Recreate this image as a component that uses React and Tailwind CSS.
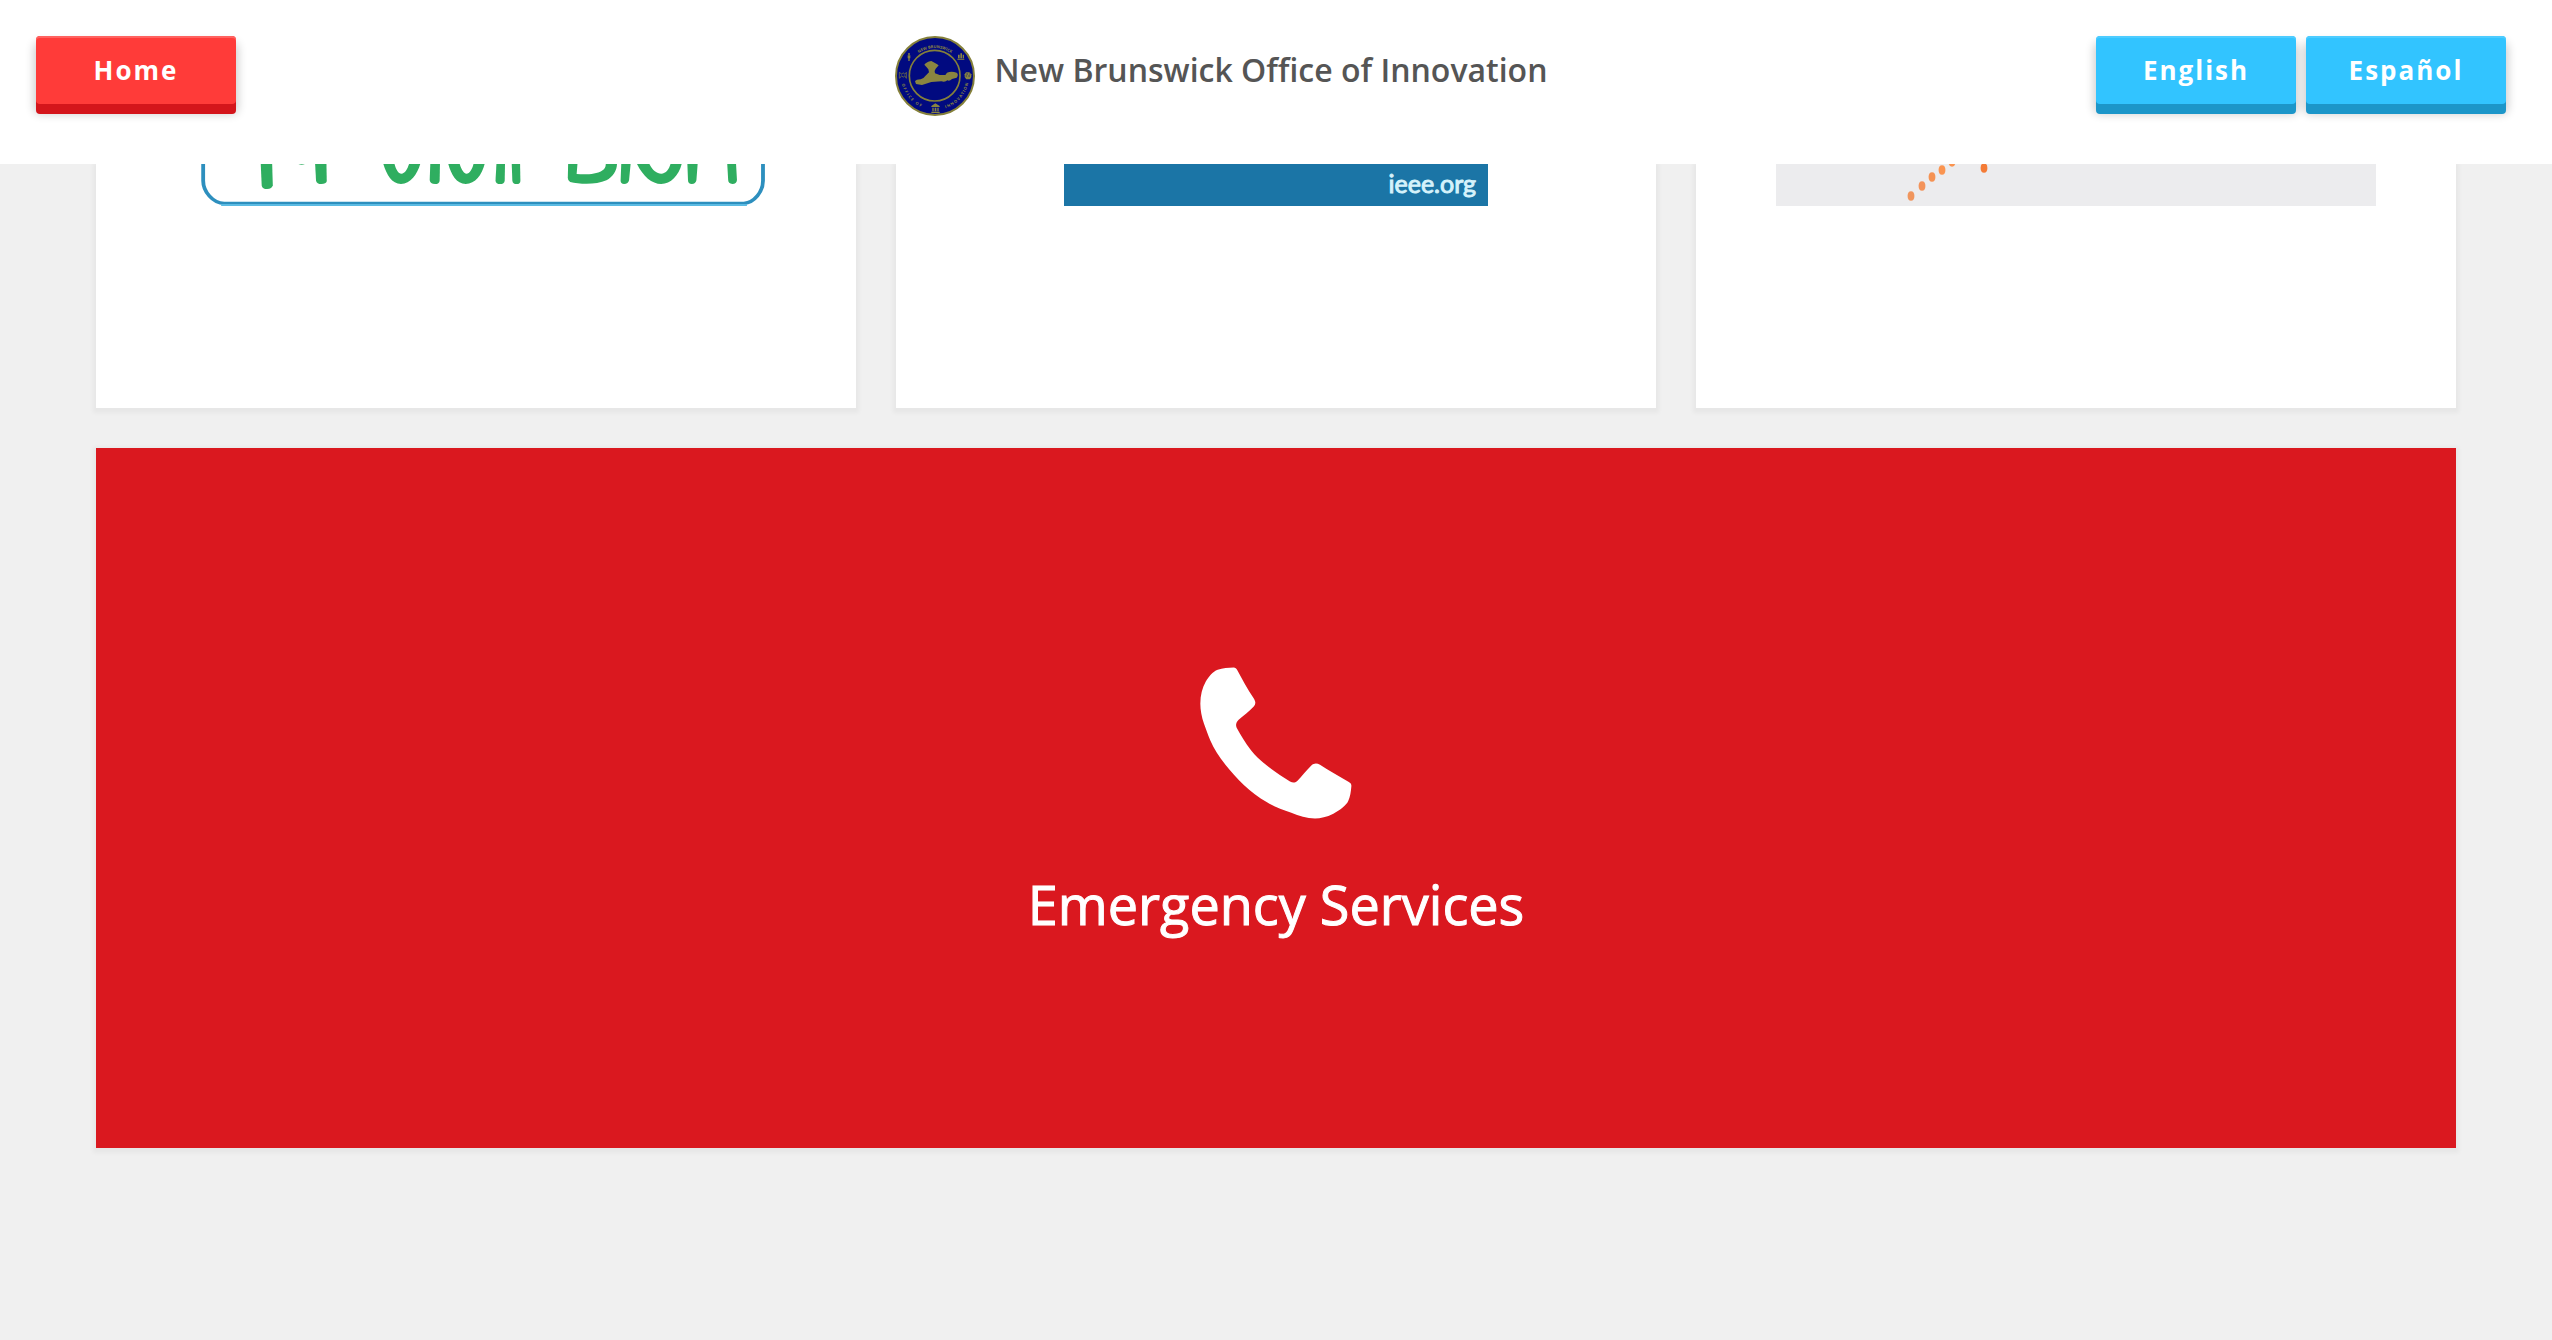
import clsx from "clsx";

const dots = [
  { x: 135, y: 32, color: "#f0955d" },
  { x: 146, y: 22, color: "#f3935a" },
  { x: 156, y: 13, color: "#f59253" },
  { x: 166, y: 6, color: "#fa9450" },
  { x: 176, y: -2, color: "#fa9450" },
  { x: 208, y: 4, color: "#f47b36" },
];

function Button({ className, children, ...props }) {
  return (
    <button
      type="button"
      className={clsx(
        "mb-[10px] h-[68px] w-[200px] rounded text-[26px] leading-[68px] font-bold tracking-[2px] text-white",
        className
      )}
      {...props}>
      {children}
    </button>
  );
}

function Seal() {
  return (
    <svg viewBox="41 48 240 240" className="size-20 shrink-0" aria-hidden="true">
      <defs>
        <path id="sealTop" d="M79 166a82 82 0 0 1 164 0" />
        <path id="sealBottom" d="M59 168a102 102 0 0 0 204 0" />
      </defs>
      <circle cx="161" cy="168" r="117" fill="#010a80" stroke="#85803a" strokeWidth="6" />
      <circle cx="160" cy="167" r="76" fill="none" stroke="#85803a" strokeWidth="5" />
      <g fill="#8a8540">
        <path d="M129 134Q134 126 150 123L165 131L172 136L163 146Q157 154 161 160L175 165H192L197 158Q210 152 226 158Q233 164 226 173L212 177Q205 184 198 181Q192 187 180 184L150 186L122 195L104 192L101 184Q104 178 118 178Q128 175 134 166L143 157L141 148Q136 141 129 134Z" />
        <circle cx="83" cy="102" r="3" />
        <path d="M79 106h8v9h-2v8h-4v-8h-2zM230 104h5v11h-5zM237 100h5v15h-5zM244 104h4v11h-4zM228 116h21v3h-21z" />
        <path d="M150 258l12-8 13 8v3h-25zM153 263h4v11h-4zM160 263h5v11h-5zM168 263h4v11h-4zM150 275h25v4h-25z" />
        <path d="M250 163l4-6h10l6 6v8l-4 7h-11l-5-7z" />
      </g>
      <path d="M54 157l8 6 4-5 4 5 5-6M55 175l6-8 5 5 4-5 5 8M54 157v18M75 157v18" fill="none" stroke="#85803a" strokeWidth="2" />
      <path d="M255 162h5m4 0h3m-14 6h4m4 0h5" stroke="#010a80" strokeWidth="2" />
      <g fill="#8a8540" fontFamily="Open Sans, sans-serif" fontWeight="700" fontSize="12">
        <text textAnchor="middle">
          <textPath href="#sealTop" startOffset="50%">NEW BRUNSWICK</textPath>
        </text>
        <text letterSpacing="4">
          <textPath href="#sealBottom" startOffset="24">OFFICE OF</textPath>
        </text>
        <text letterSpacing="3">
          <textPath href="#sealBottom" startOffset="192">INNOVATION</textPath>
        </text>
      </g>
    </svg>
  );
}

function CivilLogo() {
  return (
    <svg viewBox="-10 72 1568 126" preserveAspectRatio="none" className="h-[42px] w-[600px]" aria-hidden="true">
      <g fill="#2fae60">
        <path d="M211 60L241 60L243 136Q241 147 228 147Q216 147 214 137Z" />
        <path d="M353 60H383L384 124Q382 132 370 132Q358 132 356 122Z" />
        <path d="M310 72h17q-9 4-17 0Z" />
        <path d="M529 60H559C562 84 570 101 579 101C590 101 597 82 601 64L630 64C624 96 605 132 578 132C551 132 537 96 529 60Z" />
        <path d="M655 60H680L679 122Q678 132 667 132Q654 132 653 120Z" />
        <path d="M699 60H729C733 85 742 101 749 101C759 101 766 83 769 64L798 64C793 98 774 132 747 132C720 132 706 96 699 60Z" />
        <path d="M828 60H850L849 122Q848 132 837 132Q826 132 825 122Z" />
        <path d="M867 60H889L890 122Q890 132 880 132Q870 132 869 122Z" />
        <path d="M1015 60H1040L1037 102C1062 104 1088 103 1103 92C1112 86 1114 79 1113 64H1142C1145 88 1133 109 1115 121C1088 135 1045 133 1020 126Q1013 122 1014 110Z" />
        <path d="M1154 60H1179L1174 121Q1172 132 1161 132Q1151 131 1152 120Z" />
        <path d="M1190 60H1223C1231 88 1245 101 1258 101C1273 101 1281 82 1284 64L1313 64C1307 102 1285 132 1258 132C1231 132 1206 104 1190 60Z" />
        <path d="M1326 60H1354L1350 121Q1348 132 1338 132Q1328 132 1328 120Z" />
        <path d="M1430 60H1453L1456 120Q1455 132 1444 132Q1433 131 1433 120Z" />
      </g>
      <g fill="none" stroke="#2d8fbe">
        <path d="M61 60V122C61 154 86 190 116 190H1474C1502 188 1524 154 1524 122V60" strokeWidth="10" />
        <path d="M108 195H1482" stroke="#5bbbe3" strokeWidth="6" />
      </g>
    </svg>
  );
}

function Phone() {
  return (
    <svg viewBox="120 80 456 455" className="size-[152px]" fill="#fff" aria-hidden="true">
      <path d="M221 81C226 81 229 84 232 89C247 117 263 146 281 173C287 183 288 189 282 197C269 211 251 225 236 238C229 246 226 252 230 262C242 284 255 306 273 329C303 366 347 397 390 423C399 428 405 427 411 422C425 408 440 389 454 375C462 368 470 367 480 373C505 390 538 408 564 423C572 427 575 431 574 438C573 453 570 470 565 481C560 494 540 509 520 520C500 530 482 534 465 534C440 534 417 526 394 517C367 507 342 498 321 485C270 456 229 413 195 371C178 349 162 326 151 300C143 282 138 266 132 250C125 230 121 209 121 190C121 164 127 142 137 124C146 109 158 93 173 88C188 83 205 81 221 81Z" />
    </svg>
  );
}

function Card({ className, children }) {
  return (
    <a
      href="#"
      className={clsx("flex flex-col items-center shadow-[0_2px_4px_3px_rgba(0,0,0,0.04)]", className)}>
      {children}
    </a>
  );
}

function App() {
  return (
    <div className="min-h-screen bg-[#f0f0f0] font-['Open_Sans',sans-serif]">
      <header className="relative z-10 grid h-[164px] grid-cols-[1fr_auto_1fr] items-start bg-white pt-9">
        <div className="pl-9">
          <Button className="bg-[#ff3b39] shadow-[inset_0_2px_0_#ff6260,0_10px_0_#d4151b,0_8px_10px_2px_rgba(0,0,0,0.2)]">
            Home
          </Button>
        </div>
        <div className="flex items-start gap-5 pr-[110px]">
          <Seal />
          <h1 className="text-[32px] leading-[68px] font-semibold whitespace-nowrap text-[#555]">
            New Brunswick Office of Innovation
          </h1>
        </div>
        <div className="flex justify-end gap-[10px] pr-[46px]">
          <Button
            lang="en"
            className="bg-[#32c4ff] shadow-[inset_0_2px_0_#4dccff,0_10px_0_#1c96c9,0_8px_10px_2px_rgba(0,0,0,0.2)]">
            English
          </Button>
          <Button
            lang="es"
            className="bg-[#32c4ff] shadow-[inset_0_2px_0_#4dccff,0_10px_0_#1c96c9,0_8px_10px_2px_rgba(0,0,0,0.2)]">
            Español
          </Button>
        </div>
      </header>

      <main className="grid grid-cols-3 gap-10 px-24">
        <Card className="h-[244px] bg-white">
          <CivilLogo />
        </Card>
        <Card className="h-[244px] bg-white">
          <div className="flex h-[42px] w-[424px] items-start justify-end bg-[#1b75a6] pr-3">
            <span className="font-['Lato',sans-serif] text-[25px] leading-[38px] text-[#d5f2fb] [-webkit-text-stroke:1px]">
              ieee.org
            </span>
          </div>
        </Card>
        <Card className="h-[244px] bg-white">
          <svg viewBox="0 0 600 42" className="h-[42px] w-[600px] bg-[#ececee]" aria-hidden="true">
            {dots.map((dot) => (
              <ellipse key={dot.x} cx={dot.x} cy={dot.y} rx="3.4" ry="4.7" fill={dot.color} />
            ))}
          </svg>
        </Card>
        <Card className="col-span-3 h-[700px] justify-center gap-[60px] bg-[#da181f]">
          <Phone />
          <span className="text-[54px] leading-[50px] text-white [-webkit-text-stroke:1px]">Emergency Services</span>
        </Card>
      </main>
    </div>
  );
}

export default App;
